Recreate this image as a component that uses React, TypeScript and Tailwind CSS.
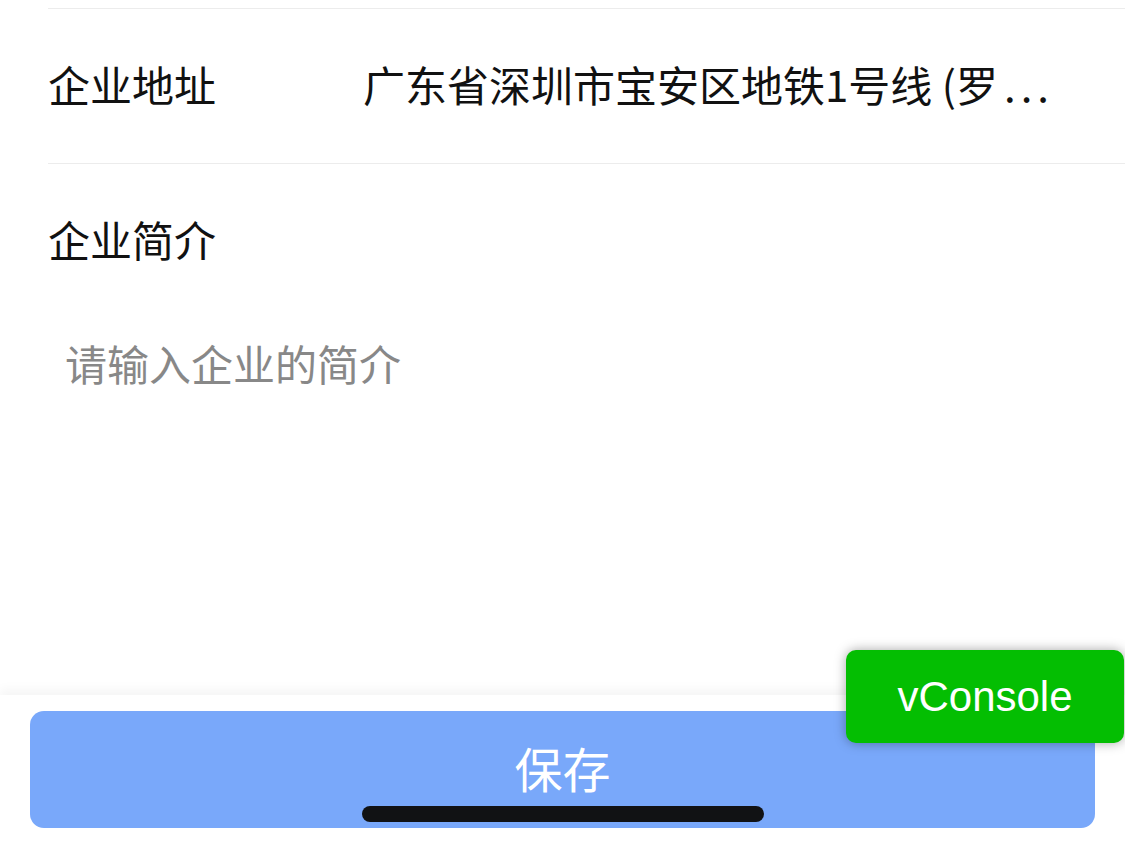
import { useState } from 'react';

const cjk = { fontFamily: '"Noto Sans CJK SC", "Noto Sans", sans-serif' };

const App = () => {
  const [intro, setIntro] = useState('');

  return (
    <div className="relative w-[1125px] h-[845px] overflow-hidden bg-white" style={cjk}>
      <div className="pt-[8px] pl-[48px]">
        {/* Address row */}
        <div className="flex items-center h-[156px] pb-[4px] border-t border-b border-[#ececec]">
          <div className="w-[315px] shrink-0 text-[42px] leading-[50px] text-[#111]">企业地址</div>
          <div className="flex-1 min-w-0 whitespace-nowrap text-[42px] leading-[50px] text-[#111]">
            广东省深圳市宝安区地铁1号线 (罗<span className="ml-[6px] tracking-[0.12em]">...</span>
          </div>
        </div>

        {/* Intro */}
        <div className="pt-[50px] text-[42px] leading-[50px] text-[#111]">企业简介</div>
        <textarea
          value={intro}
          onChange={(e) => setIntro(e.target.value)}
          placeholder="请输入企业的简介"
          className="block mt-[74px] w-[1030px] h-[300px] pl-[17px] resize-none outline-none bg-transparent text-[42px] leading-[50px] text-[#111] placeholder:text-[#888]"
          style={cjk}
        />
      </div>

      {/* Bottom bar */}
      <div className="absolute left-0 right-0 bottom-0 h-[150px] bg-white shadow-[0_-6px_10px_rgba(0,0,0,0.04)] px-[30px] pt-[16px]">
        <button className="w-full h-[117px] rounded-[14px] bg-[#79a8fa] text-white text-[48px] leading-[50px] pb-[6px]" style={cjk}>
          保存
        </button>
      </div>

      {/* Home indicator */}
      <div className="absolute left-[362px] top-[806px] w-[402px] h-[16px] rounded-full bg-[#111214]" />

      {/* vConsole switch */}
      <div
        className="absolute left-[846px] top-[650px] w-[278px] h-[93px] rounded-[10px] bg-[#04be02] shadow-[0_0_12px_rgba(0,0,0,0.35)] flex items-center justify-center text-white text-[42px]"
        style={{ fontFamily: '"Liberation Sans", Arial, sans-serif' }}
      >
        vConsole
      </div>
    </div>
  );
};

export default App;
